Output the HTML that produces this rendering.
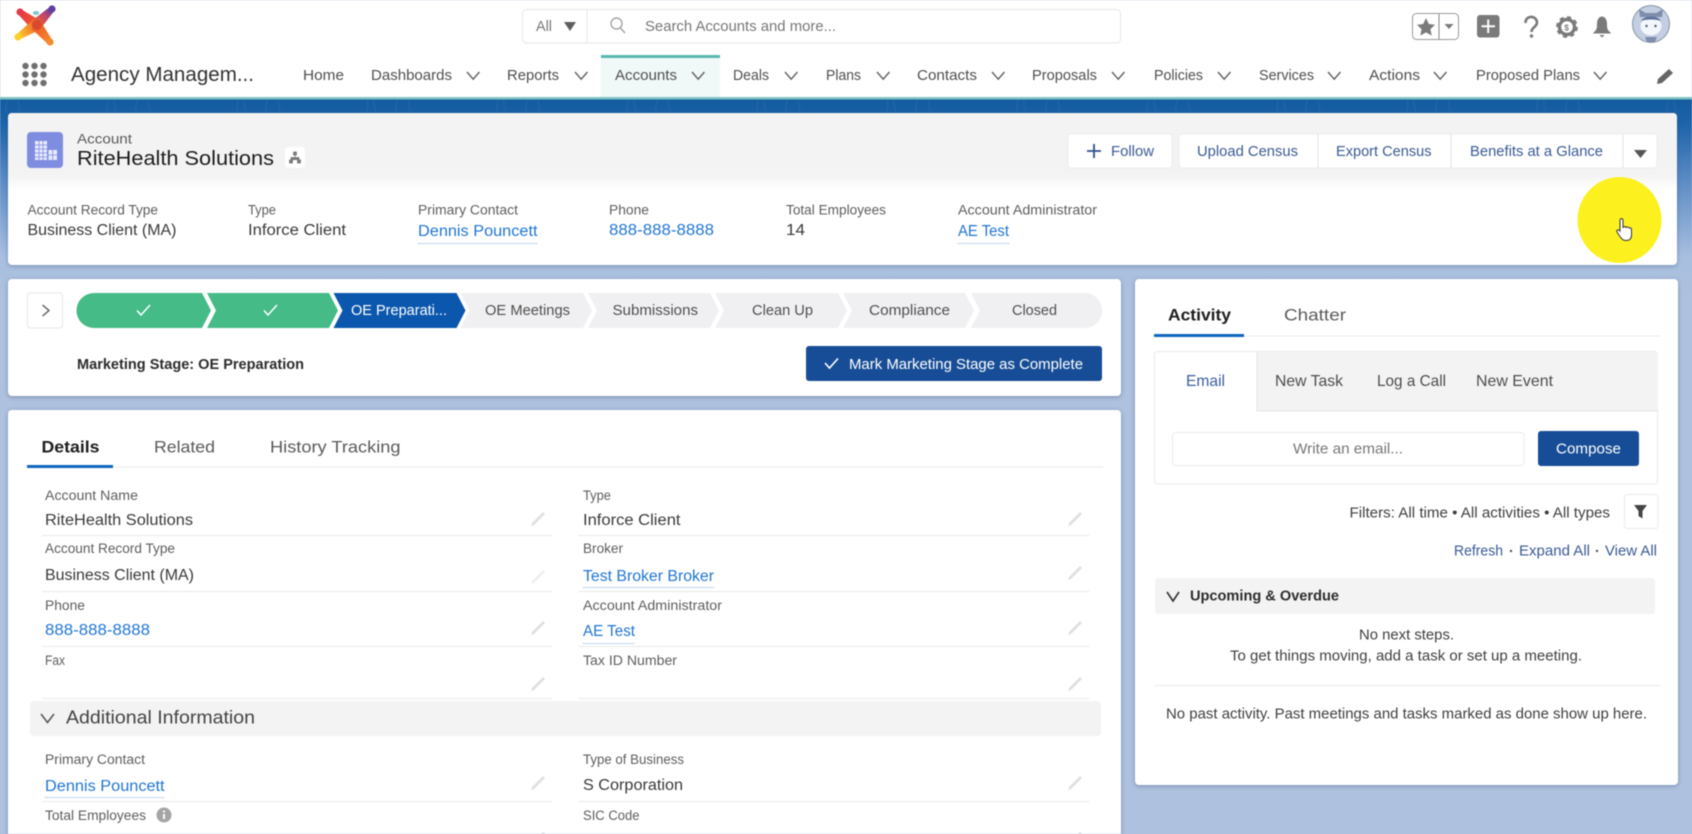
<!DOCTYPE html>
<html lang="en"><head><meta charset="utf-8"><title>RiteHealth Solutions</title>
<style>
html,body{margin:0;padding:0;background:#aec1de;width:1692px;height:834px;overflow:hidden}
svg{display:block;filter:blur(.45px)}
text{font-family:"Liberation Sans",sans-serif;white-space:pre}
.n{font-size:14.5px;fill:#4f4f4f}
.l{font-size:13.5px;fill:#5e5e5e}
.v{font-size:15.5px;fill:#3a3a3a}
.a{font-size:15.5px;fill:#2176d2}
.b{font-size:14.5px;fill:#3b5a94}
.p{font-size:14.5px;fill:#4f4f4f}
.t{font-size:16.5px;fill:#5a5a5a}
.s{font-size:14.5px;fill:#3f3f3f}
.card{filter:drop-shadow(0 1px 2px rgba(40,60,100,.4))}
</style></head><body>
<svg xmlns="http://www.w3.org/2000/svg" width="1692" height="834" viewBox="0 0 1692 834">
<defs>
<linearGradient id="bg" x1="0" y1="0" x2="0" y2="1"><stop offset="0" stop-color="#125a9e"/><stop offset=".14" stop-color="#1e65ab"/><stop offset=".42" stop-color="#5d8cc5"/><stop offset=".8" stop-color="#a8bfe0"/><stop offset="1" stop-color="#aec1de"/></linearGradient>
<linearGradient id="hd" x1="0" y1="0" x2="0" y2="1"><stop offset="0" stop-color="#f3f3f3"/><stop offset=".8" stop-color="#f3f3f3"/><stop offset="1" stop-color="#fff"/></linearGradient>
<pattern id="wav" width="130" height="40" patternUnits="userSpaceOnUse"><path d="M8 0q6 10 0 20t4 20M22 0q-8 12 0 40M60 0l-14 20M70 0l-14 20M80 0l-14 20M104 0q6 14 2 40M116 0q-6 14 2 40" fill="none" stroke="#5b9bd0" stroke-opacity=".16"/></pattern>
<linearGradient id="g1" gradientUnits="userSpaceOnUse" x1="36" y1="25" x2="20" y2="12"><stop offset="0" stop-color="#ee5a26"/><stop offset="1" stop-color="#e6394a"/></linearGradient>
<linearGradient id="g2" gradientUnits="userSpaceOnUse" x1="36" y1="25" x2="52" y2="9"><stop offset="0" stop-color="#f0662a"/><stop offset=".55" stop-color="#c6456a"/><stop offset="1" stop-color="#5d3fa3"/></linearGradient>
<linearGradient id="g3" gradientUnits="userSpaceOnUse" x1="36" y1="25" x2="18" y2="37"><stop offset="0" stop-color="#f0662a"/><stop offset="1" stop-color="#fbd22c"/></linearGradient>
<linearGradient id="g4" gradientUnits="userSpaceOnUse" x1="36" y1="25" x2="50" y2="42"><stop offset="0" stop-color="#ee5a26"/><stop offset="1" stop-color="#f68a2c"/></linearGradient>
<g id="pen"><path d="M12 0 L14 2 L3 13 L0 14 L1 11 Z" fill="#e0e0e0"/></g>
<path id="chv" d="M0 0 L6.2 7.2 L12.4 0" fill="none" stroke="#5f5f5f" stroke-width="1.4"/>
<path id="chk" d="M0 5.5 L4 10 L13 0" fill="none" stroke="#fff" stroke-width="1.5"/>
</defs>

<!-- backdrop -->
<rect x="0" y="97" width="1692" height="200" fill="url(#bg)"/>
<rect x="0" y="297" width="1692" height="537" fill="#aec1de"/>
<rect x="0" y="99" width="1692" height="14" fill="url(#wav)"/>

<!-- global header -->
<rect x="0" y="0" width="1692" height="97" fill="#fff"/>
<rect x="0" y="97" width="1692" height="2.5" fill="#7cc3c4"/>
<!-- logo -->
<polygon points="39.8,20.3 21.9,9.7 18.1,14.3 32.2,29.7" fill="url(#g1)"/><circle cx="20" cy="12" r="3.6" fill="#e6394a"/>
<polygon points="40.2,29.2 54.1,11.1 49.9,6.9 31.8,20.8" fill="url(#g2)"/><circle cx="52" cy="9" r="3.6" fill="#5d3fa3"/>
<polygon points="39.3,30 19.7,39.5 16.3,34.5 32.7,20" fill="url(#g3)"/><circle cx="18" cy="37" r="3.6" fill="#fbd22c"/>
<polygon points="40.6,21.2 52.3,40.1 47.7,43.9 31.4,28.8" fill="url(#g4)"/><circle cx="50" cy="42" r="3.6" fill="#f68a2c"/>
<circle cx="37" cy="25" r="5" fill="#d9482a"/>
<ellipse cx="36" cy="13" rx="3.2" ry="2" fill="#7cc8d0"/>
<!-- search -->
<rect x="522.5" y="9.5" width="598" height="33.5" rx="4" fill="#fff" stroke="#e6e6e6"/>
<line x1="587" y1="10" x2="587" y2="43" stroke="#e6e6e6"/>
<text x="536" y="31" class="n" style="fill:#777" textLength="16" lengthAdjust="spacingAndGlyphs">All</text>
<path d="M564 22 H576 L570 31 Z" fill="#5f5f5f"/>
<circle cx="616.5" cy="23.5" r="5.5" fill="none" stroke="#a5a5a5" stroke-width="1.4"/><path d="M620.5 28 L625 33" stroke="#a5a5a5" stroke-width="1.5"/>
<text x="645" y="31" class="n" style="fill:#777" textLength="191" lengthAdjust="spacingAndGlyphs">Search Accounts and more...</text>
<!-- top-right icons -->
<rect x="1412.5" y="13.5" width="46" height="26" rx="4" fill="#fff" stroke="#9a9a9a"/>
<line x1="1439" y1="14" x2="1439" y2="39" stroke="#888"/>
<path d="M1426 18 L1428.8 24 L1435 24.8 L1430.4 29.2 L1431.7 35.5 L1426 32.4 L1420.3 35.5 L1421.6 29.2 L1417 24.8 L1423.2 24 Z" fill="#7a7a7a"/>
<path d="M1444.5 24 H1453.5 L1449 29 Z" fill="#7a7a7a"/>
<rect x="1477" y="15" width="22.5" height="22.5" rx="3" fill="#7a7a7a"/>
<path d="M1488.2 19.5 V33 M1481.5 26.2 H1495" stroke="#fff" stroke-width="2"/>
<path d="M1525.5 23 C1525.5 14.5 1537 15.5 1537 22.5 C1537 27 1531.5 27 1531.5 32" fill="none" stroke="#7a7a7a" stroke-width="2.6"/><circle cx="1531.5" cy="36" r="1.7" fill="#7a7a7a"/>
<circle cx="1567" cy="27" r="7.5" fill="none" stroke="#7a7a7a" stroke-width="3.4"/>
<circle cx="1567" cy="27" r="9.6" fill="none" stroke="#7a7a7a" stroke-width="2.6" stroke-dasharray="4 3.5"/>
<text x="1564.4" y="30.5" style="font-size:8px;fill:#7a7a7a;font-weight:bold">$</text>
<path d="M1594 32 C1597 30 1597 27 1597 24 C1597 14 1607 14 1607 24 C1607 27 1607 30 1610 32 L1611 33.5 H1593 Z M1599.5 35 H1604.5 L1602 37.5 Z" fill="#7a7a7a"/>
<circle cx="1651" cy="24" r="18.5" fill="#c3cee2" stroke="#8a94a8" stroke-width="1"/>
<path d="M1640 17 L1639 9 L1645.5 13 H1656.5 L1663 9 L1662 17 Z" fill="#7d8dab"/>
<path d="M1645 37 h12 l-2 5 h-8 Z" fill="#7d8dab"/>
<ellipse cx="1651" cy="26" rx="10.5" ry="9.5" fill="#f3f6fb"/>
<path d="M1641 21 C1644 15 1658 15 1661 21 C1656 19 1646 19 1641 21Z" fill="#5c7399"/>
<circle cx="1646.5" cy="26" r="1.2" fill="#4b5a78"/><circle cx="1655.5" cy="26" r="1.2" fill="#4b5a78"/>

<!-- app launcher -->
<g fill="#707070">
<circle cx="25.5" cy="66" r="3.2"/><circle cx="34.5" cy="66" r="3.2"/><circle cx="43.5" cy="66" r="3.2"/>
<circle cx="25.5" cy="74.5" r="3.2"/><circle cx="34.5" cy="74.5" r="3.2"/><circle cx="43.5" cy="74.5" r="3.2"/>
<circle cx="25.5" cy="83" r="3.2"/><circle cx="34.5" cy="83" r="3.2"/><circle cx="43.5" cy="83" r="3.2"/>
</g>
<text x="71" y="81" style="font-size:20.5px;fill:#333" textLength="183" lengthAdjust="spacingAndGlyphs">Agency Managem...</text>

<!-- nav -->
<rect x="601" y="55" width="119" height="42" fill="#f1f9f8"/>
<rect x="601" y="55" width="119" height="3" fill="#5bb8b0"/>
<text x="303" y="80" class="n" textLength="41" lengthAdjust="spacingAndGlyphs">Home</text>
<text x="371" y="80" class="n" textLength="81" lengthAdjust="spacingAndGlyphs">Dashboards</text><use href="#chv" x="467" y="72"/>
<text x="507" y="80" class="n" textLength="52" lengthAdjust="spacingAndGlyphs">Reports</text><use href="#chv" x="575" y="72"/>
<text x="615" y="80" class="n" textLength="62" lengthAdjust="spacingAndGlyphs">Accounts</text><use href="#chv" x="692" y="72"/>
<text x="733" y="80" class="n" textLength="36" lengthAdjust="spacingAndGlyphs">Deals</text><use href="#chv" x="785" y="72"/>
<text x="826" y="80" class="n" textLength="35" lengthAdjust="spacingAndGlyphs">Plans</text><use href="#chv" x="877" y="72"/>
<text x="917" y="80" class="n" textLength="60" lengthAdjust="spacingAndGlyphs">Contacts</text><use href="#chv" x="992" y="72"/>
<text x="1032" y="80" class="n" textLength="65" lengthAdjust="spacingAndGlyphs">Proposals</text><use href="#chv" x="1112" y="72"/>
<text x="1154" y="80" class="n" textLength="49" lengthAdjust="spacingAndGlyphs">Policies</text><use href="#chv" x="1218" y="72"/>
<text x="1259" y="80" class="n" textLength="55" lengthAdjust="spacingAndGlyphs">Services</text><use href="#chv" x="1328" y="72"/>
<text x="1369" y="80" class="n" textLength="51" lengthAdjust="spacingAndGlyphs">Actions</text><use href="#chv" x="1434" y="72"/>
<text x="1476" y="80" class="n" textLength="104" lengthAdjust="spacingAndGlyphs">Proposed Plans</text><use href="#chv" x="1594" y="72"/>
<path d="M1669 69 L1673 73 L1662 83 L1657 84 L1658 79 Z" fill="#666"/>

<!-- record header card -->
<g class="card"><rect x="8" y="113" width="1669" height="152" rx="4" fill="#fff"/></g>
<path d="M8 117 a4 4 0 0 1 4-4 H1673 a4 4 0 0 1 4 4 V190 H8 Z" fill="url(#hd)"/>
<rect x="27" y="132" width="36" height="36" rx="4" fill="#7f8de1"/>
<path d="M35 141 H47 V160 H35 Z M48.5 150 H57 V160 H48.5 Z" fill="#e6eafb"/>
<path d="M39 141 V160 M43 141 V160 M35 145 H47 M35 149 H47 M35 153 H47 M35 157 H47 M52.7 150 V160 M48.5 155 H57" stroke="#7f8de1" stroke-width=".8"/>
<text x="77" y="143.5" style="font-size:13.5px;fill:#5a5a5a" textLength="55" lengthAdjust="spacingAndGlyphs">Account</text>
<text x="77" y="165" style="font-size:20.5px;fill:#1d1d1d" textLength="197" lengthAdjust="spacingAndGlyphs">RiteHealth Solutions</text>
<rect x="285" y="147" width="20" height="21" rx="3" fill="#fff"/>
<path d="M293.5 152 h3 v3 h-3 Z M289.5 160 h3 v3 h-3 Z M297.5 160 h3 v3 h-3 Z M295 155 v2.5 M291 160 v-2.5 h8 v2.5" fill="#777" stroke="#777" stroke-width=".7"/>

<rect x="1068" y="134" width="104" height="34" rx="3" fill="#fff" stroke="#ececec"/>
<path d="M1094 144 V158 M1087 151 H1101" stroke="#2f4f8f" stroke-width="1.8"/>
<text x="1111" y="156" class="b" textLength="43" lengthAdjust="spacingAndGlyphs">Follow</text>
<rect x="1179" y="134" width="478" height="34" rx="3" fill="#fff" stroke="#ececec"/>
<path d="M1318 134 V168 M1451 134 V168 M1623 134 V168" stroke="#e4e4e4"/>
<text x="1197" y="156" class="b" textLength="101" lengthAdjust="spacingAndGlyphs">Upload Census</text>
<text x="1336" y="156" class="b" textLength="95.5" lengthAdjust="spacingAndGlyphs">Export Census</text>
<text x="1470" y="156" class="b" textLength="133" lengthAdjust="spacingAndGlyphs">Benefits at a Glance</text>
<path d="M1634 150 H1647 L1640.5 158 Z" fill="#555"/>

<text x="27.5" y="214.5" class="l" textLength="130.5" lengthAdjust="spacingAndGlyphs">Account Record Type</text>
<text x="27.5" y="235" class="v" textLength="149" lengthAdjust="spacingAndGlyphs">Business Client (MA)</text>
<text x="248" y="214.5" class="l" textLength="28" lengthAdjust="spacingAndGlyphs">Type</text>
<text x="248" y="235" class="v" textLength="98" lengthAdjust="spacingAndGlyphs">Inforce Client</text>
<text x="418" y="214.5" class="l" textLength="100" lengthAdjust="spacingAndGlyphs">Primary Contact</text>
<text x="418" y="236" class="a" textLength="119.5" lengthAdjust="spacingAndGlyphs">Dennis Pouncett</text>
<line x1="418" y1="243.5" x2="537.5" y2="243.5" stroke="#7fb0e6" stroke-dasharray="1 1"/>
<text x="609" y="214.5" class="l" textLength="40" lengthAdjust="spacingAndGlyphs">Phone</text>
<text x="609" y="235" class="a" textLength="105" lengthAdjust="spacingAndGlyphs">888-888-8888</text>
<text x="786" y="214.5" class="l" textLength="100" lengthAdjust="spacingAndGlyphs">Total Employees</text>
<text x="786" y="235" class="v" textLength="19" lengthAdjust="spacingAndGlyphs">14</text>
<text x="958" y="214.5" class="l" textLength="139" lengthAdjust="spacingAndGlyphs">Account Administrator</text>
<text x="958" y="236" class="a" textLength="51" lengthAdjust="spacingAndGlyphs">AE Test</text>
<line x1="958" y1="243.5" x2="1009" y2="243.5" stroke="#7fb0e6" stroke-dasharray="1 1"/>

<!-- yellow highlight & cursor -->
<ellipse cx="1619.5" cy="220" rx="42" ry="43" fill="#fdf01f"/>
<path d="M1620 220.5 C1620 218 1623 218 1623 220.5 V228 C1623 226 1626 226 1626 228 C1626 226.5 1629 226.5 1629 228.5 C1629 227.5 1631.5 227.5 1631.5 229.5 V235 C1631.5 239 1629.5 240.5 1626 240.5 C1622.5 240.5 1621.5 238.5 1620 236.5 L1617 232 C1616 230 1618.5 229 1620 231 Z" fill="#fff" stroke="#333" stroke-width="1"/>

<!-- path card -->
<g class="card"><rect x="8" y="279" width="1113" height="117" rx="4" fill="#fff"/></g>
<rect x="27.5" y="293" width="35" height="35" rx="3" fill="#fff" stroke="#e6e6e6"/>
<path d="M42.5 305 L49 310.5 L42.5 316" fill="none" stroke="#555" stroke-width="1.3"/>
<path d="M94 293 H202 L211 310.5 L202 328 H94 A17.5 17.5 0 0 1 94 293 Z" fill="#45bb87"/>
<path d="M207 293 H329 L338 310.5 L329 328 H207 L216 310.5 Z" fill="#45bb87"/>
<path d="M333.5 293 H456.5 L465.5 310.5 L456.5 328 H333.5 L342.5 310.5 Z" fill="#0b57ad"/>
<path d="M460.5 293 H583 L592 310.5 L583 328 H460.5 L469.5 310.5 Z" fill="#f0f0f2"/>
<path d="M588 293 H710 L719 310.5 L710 328 H588 L597 310.5 Z" fill="#f0f0f2"/>
<path d="M715 293 H838 L847 310.5 L838 328 H715 L724 310.5 Z" fill="#f0f0f2"/>
<path d="M843 293 H965 L974 310.5 L965 328 H843 L852 310.5 Z" fill="#f0f0f2"/>
<path d="M971 293 H1084 C1096 293 1102 302 1102 310.5 C1102 319 1096 328 1084 328 H971 L980 310.5 Z" fill="#f0f0f2"/>
<use href="#chk" x="137" y="305"/>
<use href="#chk" x="264" y="305"/>
<text x="351" y="315" style="font-size:14.5px;fill:#fff" textLength="96" lengthAdjust="spacingAndGlyphs">OE Preparati...</text>
<text x="485" y="315" class="p" textLength="85" lengthAdjust="spacingAndGlyphs">OE Meetings</text>
<text x="612.5" y="315" class="p" textLength="85.5" lengthAdjust="spacingAndGlyphs">Submissions</text>
<text x="752" y="315" class="p" textLength="61" lengthAdjust="spacingAndGlyphs">Clean Up</text>
<text x="869" y="315" class="p" textLength="81" lengthAdjust="spacingAndGlyphs">Compliance</text>
<text x="1012" y="315" class="p" textLength="45" lengthAdjust="spacingAndGlyphs">Closed</text>
<text x="77" y="369" style="font-size:14.5px;fill:#2c2c2c;font-weight:bold" textLength="227" lengthAdjust="spacingAndGlyphs">Marketing Stage: OE Preparation</text>
<rect x="806" y="346" width="296" height="35" rx="3" fill="#174d96"/>
<path d="M825 363 L829.5 368 L838 358.5" fill="none" stroke="#fff" stroke-width="1.6"/>
<text x="849" y="369" style="font-size:14.5px;fill:#fff" textLength="234" lengthAdjust="spacingAndGlyphs">Mark Marketing Stage as Complete</text>

<!-- details card -->
<g class="card"><rect x="8" y="410" width="1113" height="440" rx="4" fill="#fff"/></g>
<text x="41.5" y="452.5" style="font-size:16.5px;fill:#1e1e1e;font-weight:bold" textLength="58" lengthAdjust="spacingAndGlyphs">Details</text>
<text x="154" y="452.5" class="t" textLength="61" lengthAdjust="spacingAndGlyphs">Related</text>
<text x="270" y="452.5" class="t" textLength="130.5" lengthAdjust="spacingAndGlyphs">History Tracking</text>
<line x1="27" y1="467" x2="1103" y2="467" stroke="#ebebeb"/>
<rect x="27" y="465" width="86" height="3" fill="#0f66bd"/>

<g stroke="#e8e8e8">
<path d="M42 535.5 H552 M42 591.5 H552 M42 646.5 H552 M42 698.5 H552 M42 801.5 H552"/>
<path d="M578.5 535.5 H1089 M578.5 591.5 H1089 M578.5 646.5 H1089 M578.5 698.5 H1089 M578.5 801.5 H1089"/>
</g>
<text x="45" y="500" class="l" textLength="93" lengthAdjust="spacingAndGlyphs">Account Name</text>
<text x="45" y="525" class="v" textLength="148" lengthAdjust="spacingAndGlyphs">RiteHealth Solutions</text>
<text x="45" y="553" class="l" textLength="130" lengthAdjust="spacingAndGlyphs">Account Record Type</text>
<text x="45" y="580" class="v" textLength="149" lengthAdjust="spacingAndGlyphs">Business Client (MA)</text>
<text x="45" y="610" class="l" textLength="40" lengthAdjust="spacingAndGlyphs">Phone</text>
<text x="45" y="635" class="a" textLength="105" lengthAdjust="spacingAndGlyphs">888-888-8888</text>
<text x="45" y="665" class="l" textLength="20" lengthAdjust="spacingAndGlyphs">Fax</text>
<text x="45" y="764" class="l" textLength="100" lengthAdjust="spacingAndGlyphs">Primary Contact</text>
<text x="45" y="791" class="a" textLength="119.6" lengthAdjust="spacingAndGlyphs">Dennis Pouncett</text>
<line x1="45" y1="797.5" x2="164.6" y2="797.5" stroke="#7fb0e6" stroke-dasharray="1 1"/>
<text x="45" y="820" class="l" textLength="101" lengthAdjust="spacingAndGlyphs">Total Employees</text>
<circle cx="164" cy="815" r="7.5" fill="#a5a5a5"/><rect x="163" y="814" width="2" height="5" fill="#fff"/><circle cx="164" cy="811.5" r="1.1" fill="#fff"/>

<text x="583" y="500" class="l" textLength="28" lengthAdjust="spacingAndGlyphs">Type</text>
<text x="583" y="525" class="v" textLength="97.5" lengthAdjust="spacingAndGlyphs">Inforce Client</text>
<text x="583" y="553" class="l" textLength="40" lengthAdjust="spacingAndGlyphs">Broker</text>
<text x="583" y="581" class="a" textLength="131" lengthAdjust="spacingAndGlyphs">Test Broker Broker</text>
<line x1="583" y1="587.5" x2="714" y2="587.5" stroke="#7fb0e6" stroke-dasharray="1 1"/>
<text x="583" y="610" class="l" textLength="139" lengthAdjust="spacingAndGlyphs">Account Administrator</text>
<text x="583" y="636" class="a" textLength="52" lengthAdjust="spacingAndGlyphs">AE Test</text>
<line x1="583" y1="643.5" x2="635" y2="643.5" stroke="#7fb0e6" stroke-dasharray="1 1"/>
<text x="583" y="665" class="l" textLength="94" lengthAdjust="spacingAndGlyphs">Tax ID Number</text>
<text x="583" y="764" class="l" textLength="101" lengthAdjust="spacingAndGlyphs">Type of Business</text>
<text x="583" y="790" class="v" textLength="100" lengthAdjust="spacingAndGlyphs">S Corporation</text>
<text x="583" y="820" class="l" textLength="56.5" lengthAdjust="spacingAndGlyphs">SIC Code</text>

<use href="#pen" x="531" y="512"/><use href="#pen" x="1068" y="512"/>
<use href="#pen" x="1068" y="566"/>
<g opacity=".5"><use href="#pen" x="531" y="570"/></g>
<use href="#pen" x="531" y="621"/><use href="#pen" x="1068" y="621"/>
<use href="#pen" x="531" y="677"/><use href="#pen" x="1068" y="677"/>
<use href="#pen" x="531" y="776"/><use href="#pen" x="1068" y="776"/>
<use href="#pen" x="531" y="832"/><use href="#pen" x="1068" y="832"/>

<rect x="30" y="701" width="1071" height="35" rx="4" fill="#f3f3f3"/>
<path d="M41 714 L47.5 722.5 L54 714" fill="none" stroke="#555" stroke-width="1.5"/>
<text x="66" y="723.5" style="font-size:18px;fill:#444" textLength="189" lengthAdjust="spacingAndGlyphs">Additional Information</text>

<!-- right card -->
<g class="card"><rect x="1135" y="279" width="543" height="506" rx="4" fill="#fff"/></g>
<text x="1168" y="320.5" style="font-size:17px;fill:#1e1e1e;font-weight:bold" textLength="63" lengthAdjust="spacingAndGlyphs">Activity</text>
<text x="1284" y="320.5" class="t" textLength="62" lengthAdjust="spacingAndGlyphs">Chatter</text>
<line x1="1154" y1="336" x2="1660" y2="336" stroke="#ebebeb"/>
<rect x="1154" y="334" width="90" height="3" fill="#0f66bd"/>

<rect x="1154.5" y="351.5" width="503" height="132.5" rx="3" fill="#fff" stroke="#ebebeb"/>
<path d="M1257 352 H1655 a3 3 0 0 1 3 3 V411 H1257 Z" fill="#f3f3f3"/>
<path d="M1257 352 V411 H1658" fill="none" stroke="#e4e4e4"/>
<text x="1186" y="386" style="font-size:16px;fill:#3b5f9e" textLength="39" lengthAdjust="spacingAndGlyphs">Email</text>
<text x="1275" y="386" style="font-size:16px;fill:#4d4d4d" textLength="68" lengthAdjust="spacingAndGlyphs">New Task</text>
<text x="1377" y="386" style="font-size:16px;fill:#4d4d4d" textLength="69" lengthAdjust="spacingAndGlyphs">Log a Call</text>
<text x="1476" y="386" style="font-size:16px;fill:#4d4d4d" textLength="77" lengthAdjust="spacingAndGlyphs">New Event</text>
<rect x="1172.5" y="432.5" width="351.5" height="33" rx="3" fill="#fff" stroke="#ebebeb"/>
<text x="1293" y="453.5" style="font-size:14.5px;fill:#777" textLength="110" lengthAdjust="spacingAndGlyphs">Write an email...</text>
<rect x="1538" y="431" width="101" height="35" rx="3" fill="#174d96"/>
<text x="1556" y="453.5" style="font-size:14.5px;fill:#fff" textLength="65" lengthAdjust="spacingAndGlyphs">Compose</text>

<text x="1349.5" y="517.5" class="s" textLength="260.5" lengthAdjust="spacingAndGlyphs">Filters: All time • All activities • All types</text>
<rect x="1624.5" y="494.5" width="33.5" height="34" rx="3" fill="#fff" stroke="#ebebeb"/>
<path d="M1634 505 H1647 L1642.5 511 V518.5 L1638.5 516 V511 Z" fill="#444"/>
<text x="1454" y="555.5" class="b" textLength="49" lengthAdjust="spacingAndGlyphs">Refresh</text>
<circle cx="1511" cy="551" r="1.2" fill="#555"/>
<text x="1519" y="555.5" class="b" textLength="71" lengthAdjust="spacingAndGlyphs">Expand All</text>
<circle cx="1597" cy="551" r="1.2" fill="#555"/>
<text x="1605" y="555.5" class="b" textLength="52" lengthAdjust="spacingAndGlyphs">View All</text>

<rect x="1155" y="578" width="500" height="36" rx="3" fill="#f3f3f3"/>
<path d="M1167 592 L1173 601 L1179 592" fill="none" stroke="#333" stroke-width="1.6"/>
<text x="1190" y="600.5" style="font-size:14.5px;fill:#2c2c2c;font-weight:bold" textLength="149" lengthAdjust="spacingAndGlyphs">Upcoming &amp; Overdue</text>
<text x="1359" y="639.5" class="s" textLength="95" lengthAdjust="spacingAndGlyphs">No next steps.</text>
<text x="1230" y="660.5" class="s" textLength="352" lengthAdjust="spacingAndGlyphs">To get things moving, add a task or set up a meeting.</text>
<line x1="1154" y1="685.5" x2="1661" y2="685.5" stroke="#e8e8e8"/>
<text x="1166" y="718.5" class="s" textLength="481" lengthAdjust="spacingAndGlyphs">No past activity. Past meetings and tasks marked as done show up here.</text>
</svg>
</body></html>
